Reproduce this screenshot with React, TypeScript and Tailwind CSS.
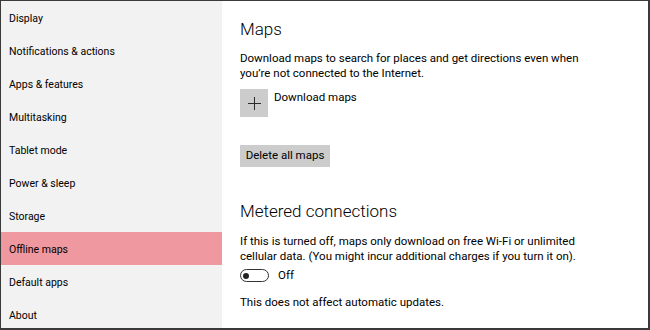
import React from "react";

const navItems = [
  "Display",
  "Notifications & actions",
  "Apps & features",
  "Multitasking",
  "Tablet mode",
  "Power & sleep",
  "Storage",
  "Offline maps",
  "Default apps",
  "About",
];

const App: React.FC = () => {
  return (
    <div
      className="w-[650px] h-[330px] flex overflow-hidden border-t border-l border-r-2 border-b-2 border-[#3a3a3a] text-black"
      style={{ fontFamily: 'Roboto, "Open Sans", sans-serif' }}
    >
      {/* left nav */}
      <div className="w-[221px] shrink-0 bg-[#f2f2f2] flex flex-col">
        {navItems.map((item) => (
          <div
            key={item}
            className={
              item === "Offline maps"
                ? "h-[33px] shrink-0 flex items-center pl-[8px] pt-[2px] text-[10.5px] bg-[#f0989f]"
                : "h-[33px] shrink-0 flex items-center pl-[8px] pt-[2px] text-[10.5px]"
            }
          >
            {item}
          </div>
        ))}
      </div>

      {/* content */}
      <div className="flex-1 bg-white pl-[18px] pt-[14px]">
        <h1 className="text-[17px] leading-[28px] font-light">Maps</h1>
        <p className="mt-[8px] text-[11.5px] leading-[15px]">
          <span className="block">
            Download maps to search for places and get directions even when
          </span>
          <span className="block">you’re not connected to the Internet.</span>
        </p>

        <div className="mt-[8px] flex items-start gap-[6px]">
          <div className="w-[28px] h-[28px] bg-[#cccccc] flex items-center justify-center">
            <svg width="13" height="13" viewBox="0 0 13 13">
              <path d="M6.5 0V13M0 6.5H13" stroke="#2a2a2a" strokeWidth="1" />
            </svg>
          </div>
          <span className="text-[11.5px] leading-[15px] mt-[1px]">
            Download maps
          </span>
        </div>

        <button className="mt-[28px] h-[22px] w-[90px] bg-[#cccccc] text-[11.5px] flex items-center justify-center">
          Delete all maps
        </button>

        <h2 className="mt-[30px] text-[17px] leading-[28px] font-light">
          Metered connections
        </h2>
        <p className="mt-[9px] text-[11.5px] leading-[15px]">
          <span className="block">
            If this is turned off, maps only download on free Wi-Fi or unlimited
          </span>
          <span className="block">
            cellular data. (You might incur additional charges if you turn it on).
          </span>
        </p>

        <div className="mt-[4px] flex items-center gap-[9px]">
          <div className="w-[29px] h-[13px] rounded-full border-[1.5px] border-[#333] flex items-center pl-[2px]">
            <div className="w-[6px] h-[6px] rounded-full bg-[#222]" />
          </div>
          <span className="text-[11.5px] leading-[15px]">Off</span>
        </div>

        <p className="mt-[12px] text-[11.5px] leading-[15px]">
          This does not affect automatic updates.
        </p>
      </div>
    </div>
  );
};

export default App;
